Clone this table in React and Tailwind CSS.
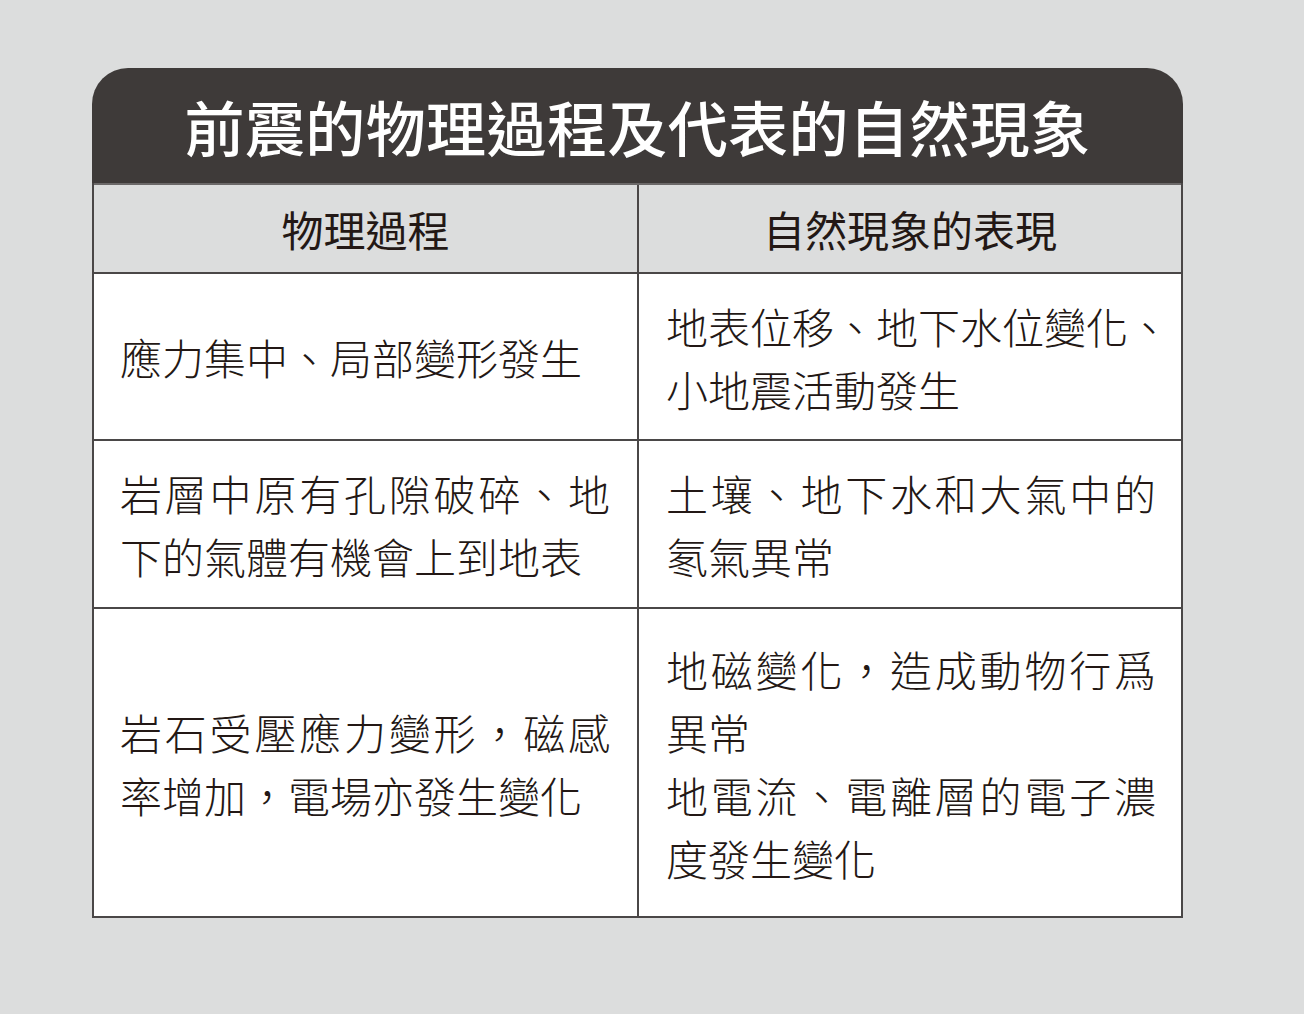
const font = { fontFamily: '"Noto Sans CJK TC", "Noto Sans", sans-serif' }

const rows = [
  {
    h: 'h-[167px]',
    left: [{ t: '應力集中、局部變形發生' }],
    right: [{ t: '地表位移、地下水位變化、' }, { t: '小地震活動發生' }],
  },
  {
    h: 'h-[168px]',
    left: [{ t: '岩層中原有孔隙破碎、地', j: true }, { t: '下的氣體有機會上到地表' }],
    right: [{ t: '土壤、地下水和大氣中的', j: true }, { t: '氡氣異常' }],
  },
  {
    h: 'h-[309px]',
    left: [{ t: '岩石受壓應力變形，磁感', j: true }, { t: '率增加，電場亦發生變化' }],
    right: [
      { t: '地磁變化，造成動物行爲', j: true },
      { t: '異常' },
      { t: '地電流、電離層的電子濃', j: true },
      { t: '度發生變化' },
    ],
  },
]

function Lines({ lines }) {
  return (
    <div className="flex flex-col">
      {lines.map((l, i) =>
        l.j ? (
          <div key={i} className="w-[490px] h-[63px] leading-[63px] text-justify [text-align-last:justify]">
            {l.t}
          </div>
        ) : (
          <div key={i} className="w-[490px] h-[63px] leading-[63px] whitespace-nowrap">
            {l.t}
          </div>
        )
      )}
    </div>
  )
}

export default function App() {
  return (
    <div className="min-h-screen bg-[#dcdddd] pt-[68px] pl-[92px]" style={font}>
      <div className="w-[1091px]">
        {/* Title bar */}
        <div className="h-[115px] rounded-t-[36px] bg-[#3e3a39] flex items-center justify-center">
          <h1 className="text-white text-[60px] font-medium leading-none tracking-[0.4px]">
            前震的物理過程及代表的自然現象
          </h1>
        </div>

        {/* Table */}
        <div className="border-x-2 border-b-2 border-[#4a4747] bg-white text-[42px] text-[#231815] font-light">
          <div className="grid grid-cols-[545px_1fr] h-[89px] border-t-2 border-[#6b6868] bg-[#dcdddd] font-normal">
            <div className="flex items-center justify-center border-r-2 border-[#4a4747]">
              物理過程
            </div>
            <div className="flex items-center justify-center">
              自然現象的表現
            </div>
          </div>
          {rows.map((r, i) => (
            <div key={i} className={`grid grid-cols-[545px_1fr] border-t-2 border-[#4a4747] ${r.h}`}>
              <div className="flex items-center pl-[26px] border-r-2 border-[#4a4747]">
                <Lines lines={r.left} />
              </div>
              <div className="flex items-center pl-[27px]">
                <Lines lines={r.right} />
              </div>
            </div>
          ))}
        </div>
      </div>
    </div>
  )
}
